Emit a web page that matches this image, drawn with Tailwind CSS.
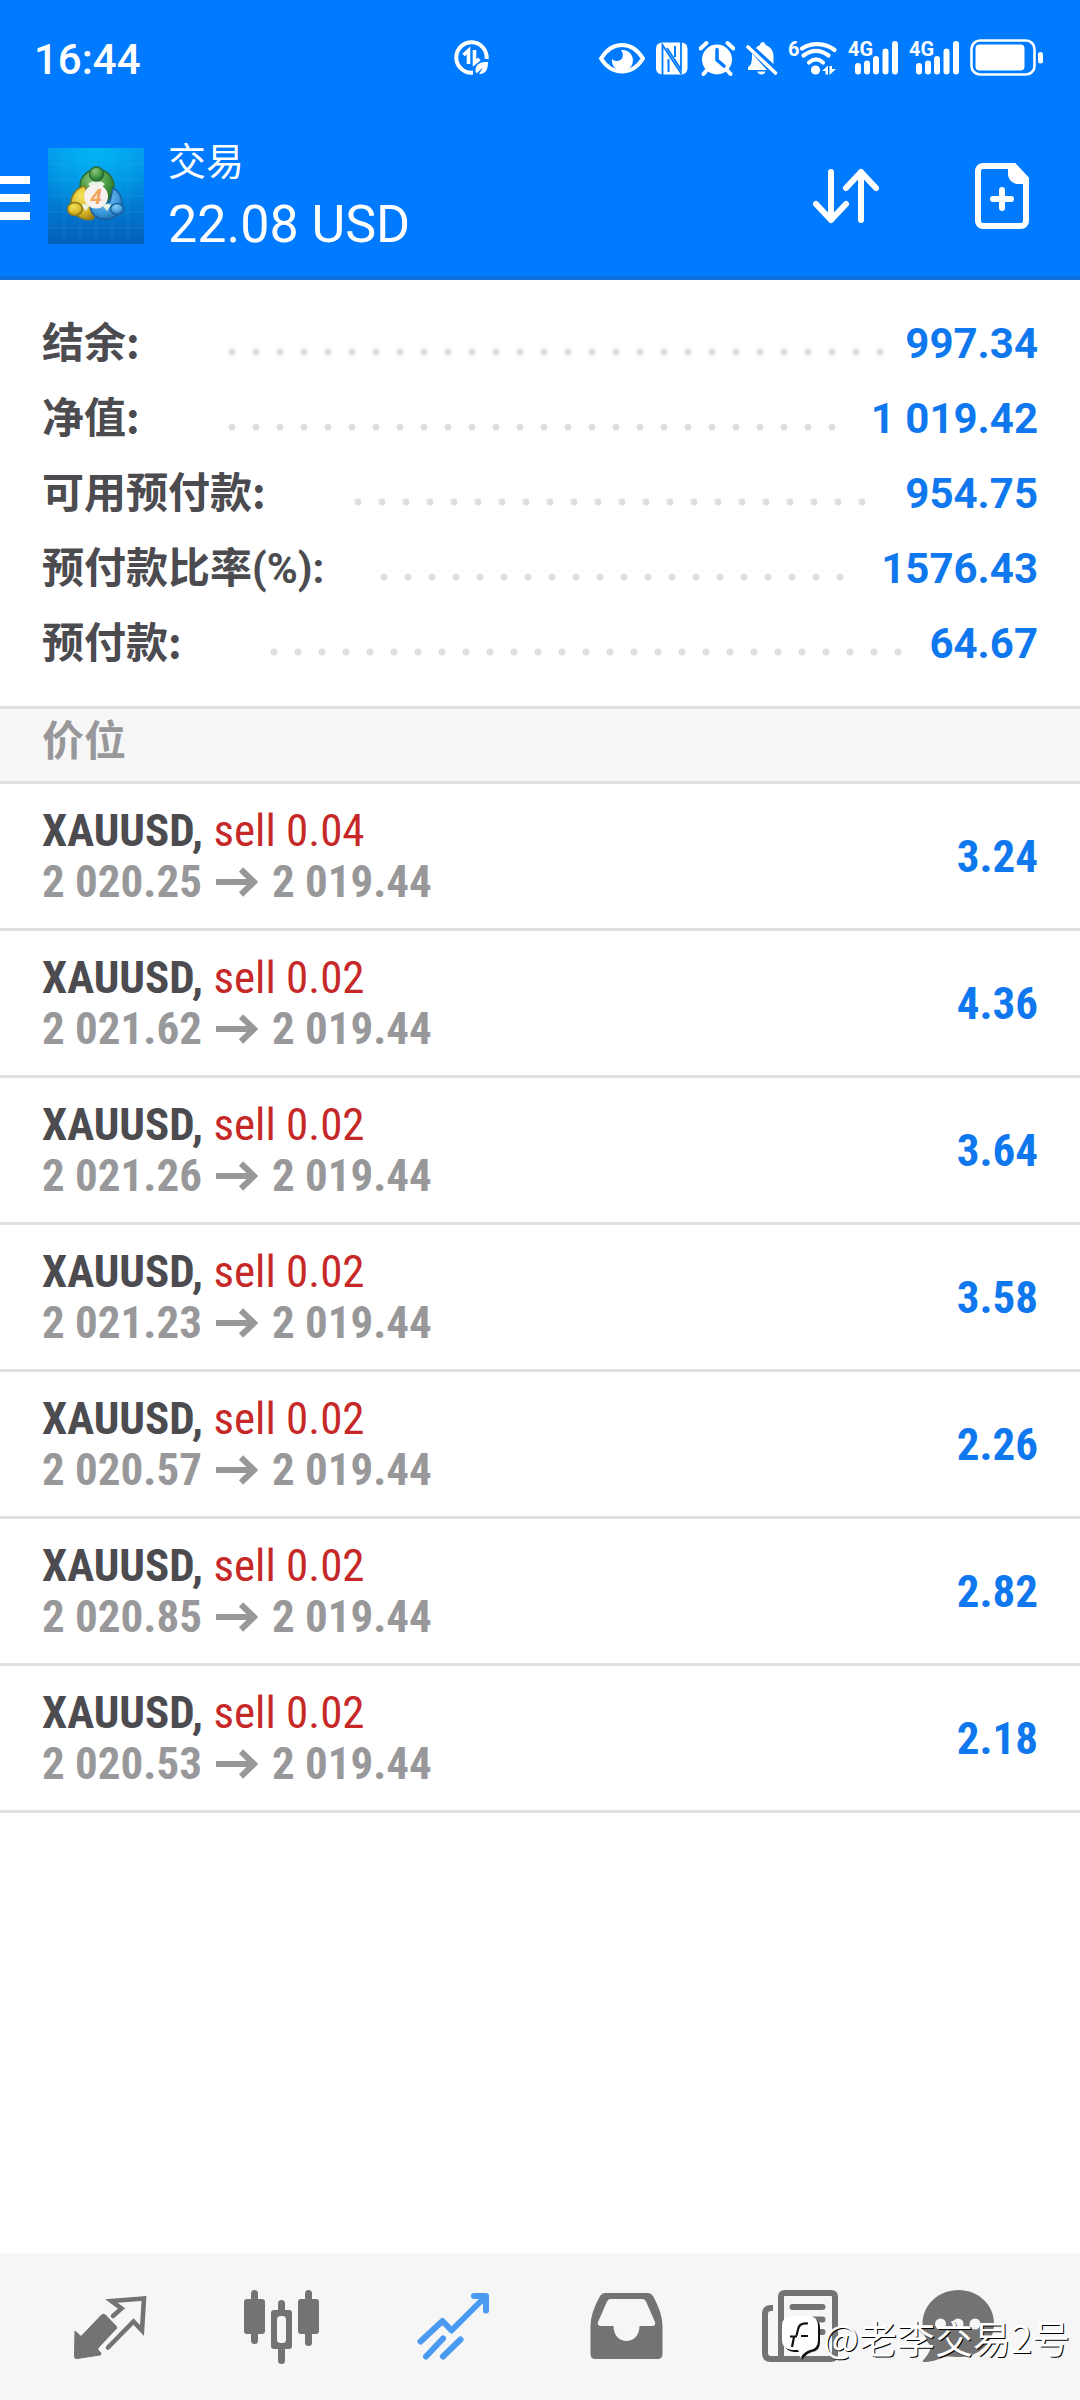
<!DOCTYPE html>
<html lang="zh-CN">
<head>
<meta charset="utf-8">
<meta name="viewport" content="width=device-width, initial-scale=1">
<title>交易</title>
<script src="https://cdn.jsdelivr.net/npm/@tailwindcss/browser@4"></script>
</head>
<body class="relative flex min-h-screen flex-col bg-white font-['Roboto','Noto_Sans_CJK_SC',sans-serif] text-[#4b4b50]">

<header class="border-b-4 border-[#0f6fdc] bg-[#007aff] text-white">
  <!-- Status bar -->
  <div class="grid h-[116px] grid-cols-[43.5%_10%_1fr] items-center pr-9">
    <span class="pt-1 pl-[34px] text-[42px] leading-none font-medium">16:44</span>
    <svg class="h-9 w-9" viewBox="0 0 36 36" fill="none" stroke="#fff" aria-hidden="true">
      <path d="M32.6 19A15.2 15.2 0 1 0 19 32.6" stroke-width="4"/>
      <path d="M9.500 15l5-4.500V24M20.500 10v13l5-4" stroke-width="3.600"/>
      <path d="M34 22c-7-.5-12.500 2-12.500 8 0 1 .3 2.300.8 3.500l6.700-6-4 6.500c7 .5 9-5 9-12z" fill="#fff" stroke="none"/>
    </svg>
    <div class="flex justify-end gap-[11px]">
      <svg class="h-11 w-[46px]" viewBox="0 0 46 44" aria-hidden="true">
        <path d="M2 22.500C8 13 15 9 23 9s15 4 21 13.500C38 32 31 35.500 23 35.500S8 32 2 22.500z" fill="none" stroke="#fff" stroke-width="4" stroke-linejoin="round"/>
        <path d="M22 14a10.500 10.500 0 1 1-9 9c3 3 8 2.500 10-.5 1.500-2.800 1-6-1-8.500z" fill="#fff"/>
      </svg>
      <svg class="h-11 w-8" viewBox="0 0 32 44" aria-hidden="true">
        <rect x="0" y="6.500" width="31.500" height="32" rx="6" fill="#fff"/>
        <path d="M6.500 39V9l19 29M25 6v27.500L11 12" fill="none" stroke="#007aff" stroke-width="1.800"/>
        <path d="M12.500 23v13M19 10v11" fill="none" stroke="#007aff" stroke-width="2"/>
      </svg>
      <svg class="h-11 w-9" viewBox="0 0 36 44" aria-hidden="true">
        <circle cx="18" cy="23.500" r="15" fill="#fff"/>
        <path d="M1.500 12.500l6-5.500M34.500 12.500l-6-5.500M8 34l-3.500 4M28 34l3.500 4" stroke="#fff" stroke-width="4" stroke-linecap="round"/>
        <path d="M18 13.500V24l7 6" fill="none" stroke="#007aff" stroke-width="3.500" stroke-linecap="round"/>
      </svg>
      <svg class="h-11 w-8" viewBox="0 0 32 44" aria-hidden="true">
        <path d="M6 17.500L21 34H2v-2.500l3-3.500c1-3 1-7 1-10.500zM10 12c1-1.500 2.500-2.500 4-3 .5-4 5-4 5.500 0 5 1.500 8 6 8 11v8zM11.500 35.500h8c-.5 4-7.500 4-8 0z" fill="#fff"/>
        <path d="M2 11l27.500 26" stroke="#fff" stroke-width="3.600" stroke-linecap="round"/>
      </svg>
      <svg class="h-11 w-12 overflow-visible" viewBox="0 0 48 44" fill="none" stroke="#fff" stroke-width="4.200" stroke-linecap="round" aria-hidden="true">
        <text x="-1" y="19.500" fill="#fff" stroke="none" class="text-[20px] font-bold">6</text>
        <path d="M13 12.500c9-6 23-6 32.500 1.500M14.500 19.500c8-6 17-6 25 0M20 26.500c4.500-4 9.500-4 14 0"/>
        <circle cx="26.500" cy="34" r="4.600" fill="#fff" stroke="none"/>
        <path d="M33 35l6-5.500v9h-2.500V35zM40.500 30h2.500v3h4l-6.500 6z" fill="#fff" stroke="none"/>
      </svg>
      <svg class="h-11 w-[50px]" viewBox="0 0 50 44" aria-hidden="true">
        <text x="0" y="20" fill="#fff" class="text-[20px] font-bold">4G</text>
        <path d="M10 30v5.500M19 27.500v8M28 23v12.500M37.500 15.500v20M47 8v27.500" stroke="#fff" stroke-width="6" stroke-linecap="round"/>
      </svg>
      <svg class="h-11 w-[50px]" viewBox="0 0 50 44" aria-hidden="true">
        <text x="0" y="20" fill="#fff" class="text-[20px] font-bold">4G</text>
        <path d="M10 30v5.500M19 27.500v8M28 23v12.500M37.500 15.500v20M47 8v27.500" stroke="#fff" stroke-width="6" stroke-linecap="round"/>
      </svg>
      <svg class="h-11 w-[74px]" viewBox="0 0 74 44" aria-hidden="true">
        <rect x="1.500" y="4.500" width="63" height="34" rx="8.500" fill="none" stroke="#fff" stroke-width="2.600"/>
        <rect x="5.500" y="8.500" width="49" height="26" rx="4" fill="#fff"/>
        <rect x="68" y="16" width="5" height="11.500" rx="2.500" fill="#fff"/>
      </svg>
    </div>
  </div>

  <!-- App bar -->
  <div class="flex h-[160px] items-center pr-[51px]">
    <button type="button" aria-label="菜单" class="flex w-12 flex-col gap-[10px] pt-1">
      <span class="h-2 w-[30px] bg-white"></span>
      <span class="h-2 w-[30px] bg-white"></span>
      <span class="h-2 w-[30px] bg-white"></span>
    </button>
    <svg class="h-24 w-24" viewBox="0 0 96 96" role="img" aria-label="MetaTrader 4">
      <defs>
        <linearGradient id="sky" x1="0" y1="0" x2="0" y2="1"><stop offset="0" stop-color="#0597e8"/><stop offset=".5" stop-color="#0080d6"/><stop offset="1" stop-color="#0560b8"/></linearGradient>
        <radialGradient id="glow" cx=".5" cy="0" r=".7"><stop offset="0" stop-color="#00b4f5"/><stop offset="1" stop-color="#00b4f5" stop-opacity="0"/></radialGradient>
        <radialGradient id="green" cx=".4" cy=".3" r=".8"><stop offset="0" stop-color="#8cc878"/><stop offset=".6" stop-color="#3f9440"/><stop offset="1" stop-color="#1d6428"/></radialGradient>
        <radialGradient id="yellow" cx=".4" cy=".3" r=".8"><stop offset="0" stop-color="#f3e35a"/><stop offset=".6" stop-color="#dcb827"/><stop offset="1" stop-color="#9a7b14"/></radialGradient>
        <radialGradient id="blue" cx=".4" cy=".3" r=".8"><stop offset="0" stop-color="#8dcdf4"/><stop offset=".6" stop-color="#3f9bdc"/><stop offset="1" stop-color="#1664ab"/></radialGradient>
      </defs>
      <path fill="url(#sky)" d="M0 0h96v96H0z"/>
      <path fill="url(#glow)" d="M0 0h96v96H0z"/>
      <path d="M16 0v96M32 0v96M48 0v96M64 0v96M80 0v96M0 16h96M0 32h96M0 48h96M0 64h96M0 80h96" stroke="#5cc4ff" stroke-opacity=".15"/>
      <g stroke-width="1.500">
        <path d="M32 39a17 17 0 1 1 33 5l-6 10-20-13-7 1z" fill="url(#green)" stroke="#2b6b35"/>
        <path d="M37 38a17 17 0 1 0 8 33l3-6-9-19z" fill="url(#yellow)" stroke="#8d7a1c"/>
        <path d="M65 40c12 7 12 24-1 30-12 4-21-2-22-12l20-4z" fill="url(#blue)" stroke="#1c5f9c"/>
        <path d="M40 36c4-4 13-4 17 0l-4 4H44zM33 57c3-2 6-1 8 1l-3 5zM63 57c-3-2-6-1-8 1l4 5z" fill="#e8f4e4" stroke="none"/>
        <circle cx="48.500" cy="26" r="7" fill="url(#green)" stroke="#2b6b35"/>
        <ellipse cx="27" cy="61" rx="7.500" ry="6.500" fill="url(#yellow)" stroke="#8d7a1c"/>
        <ellipse cx="69" cy="61" rx="6.500" ry="5.500" fill="url(#blue)" stroke="#1c5f9c"/>
      </g>
      <circle cx="48" cy="48.500" r="12" fill="#f6f1ee"/>
      <text x="48" y="56" text-anchor="middle" fill="#f2a35a" class="text-[21px] font-bold italic">4</text>
    </svg>
    <div class="ml-6 flex-1 pt-[3px]">
      <h1 class="text-[38px] leading-[52px]">交易</h1>
      <p class="pt-[3px] text-[52px] leading-[68px]">22.08 USD</p>
    </div>
    <button type="button" aria-label="排序">
      <svg class="h-[66px] w-[66px]" viewBox="0 0 66 66" fill="none" stroke="#fff" stroke-width="6" stroke-linecap="round" stroke-linejoin="round">
        <path d="M18 9v48M3 41l15 16 15-16M48 57V9M33 25L48 9l15 16"/>
      </svg>
    </button>
    <button type="button" aria-label="新订单" class="ml-24">
      <svg class="h-[66px] w-[54px]" viewBox="0 0 54 66" fill="none" stroke="#fff" stroke-width="6" stroke-linecap="round">
        <path d="M8 3h31l12 13v42a5 5 0 0 1-5 5H8a5 5 0 0 1-5-5V8a5 5 0 0 1 5-5z"/>
        <path d="M33 3h8l11 12v6H42c-6-1-9-6-9-10z" fill="#fff" stroke="none"/>
        <path d="M27 27v18M18 36h18"/>
      </svg>
    </button>
  </div>
</header>

<main class="flex-1">
  <!-- Account summary -->
  <dl class="pt-[22px] pb-[29px] text-[42px] leading-[75px] font-bold">
    <div class="flex h-[75px] items-baseline px-[42px]">
      <dt class="mr-20 font-['Noto_Sans_CJK_SC',sans-serif]">结余:</dt>
      <dd class="mr-3 h-2 flex-1 self-center pt-4" aria-hidden="true"><div class="h-2 w-[round(down,100%,24px)] bg-[radial-gradient(circle,#dfdfdf_3px,transparent_4px)] bg-[length:24px_8px]"></div></dd>
      <dd class="text-[#0f78ee]">997.34</dd>
    </div>
    <div class="flex h-[75px] items-baseline px-[42px]">
      <dt class="mr-20 font-['Noto_Sans_CJK_SC',sans-serif]">净值:</dt>
      <dd class="mr-3 h-2 flex-1 self-center pt-4" aria-hidden="true"><div class="h-2 w-[round(down,100%,24px)] bg-[radial-gradient(circle,#dfdfdf_3px,transparent_4px)] bg-[length:24px_8px]"></div></dd>
      <dd class="text-[#0f78ee]">1 019.42</dd>
    </div>
    <div class="flex h-[75px] items-baseline px-[42px]">
      <dt class="mr-20 font-['Noto_Sans_CJK_SC',sans-serif]">可用预付款:</dt>
      <dd class="mr-3 h-2 flex-1 self-center pt-4" aria-hidden="true"><div class="h-2 w-[round(down,100%,24px)] bg-[radial-gradient(circle,#dfdfdf_3px,transparent_4px)] bg-[length:24px_8px]"></div></dd>
      <dd class="text-[#0f78ee]">954.75</dd>
    </div>
    <div class="flex h-[75px] items-baseline px-[42px]">
      <dt class="mr-12 font-['Noto_Sans_CJK_SC',sans-serif]">预付款比率<span class="font-['Roboto',sans-serif] leading-none">(%):</span></dt>
      <dd class="mr-3 h-2 flex-1 self-center pt-4" aria-hidden="true"><div class="h-2 w-[round(down,100%,24px)] bg-[radial-gradient(circle,#dfdfdf_3px,transparent_4px)] bg-[length:24px_8px]"></div></dd>
      <dd class="text-[#0f78ee]">1576.43</dd>
    </div>
    <div class="flex h-[75px] items-baseline px-[42px]">
      <dt class="mr-20 font-['Noto_Sans_CJK_SC',sans-serif]">预付款:</dt>
      <dd class="mr-3 h-2 flex-1 self-center pt-4" aria-hidden="true"><div class="h-2 w-[round(down,100%,24px)] bg-[radial-gradient(circle,#dfdfdf_3px,transparent_4px)] bg-[length:24px_8px]"></div></dd>
      <dd class="text-[#0f78ee]">64.67</dd>
    </div>
  </dl>

  <h2 class="h-[78px] border-y-3 border-[#e1e1e1] bg-[#f7f7f7] px-[42px] text-[42px] leading-[66px] font-bold text-[#98989a]">价位</h2>

  <!-- Open positions -->
  <table class="w-full border-separate border-spacing-0 font-['Roboto_Condensed','Liberation_Sans_Narrow',sans-serif] text-[45px] leading-[51px] font-bold">
    <tbody id="positions"></tbody>
  </table>
</main>

<nav class="grid h-[147px] grid-cols-[172fr_172fr_172fr_172fr_172fr_148fr] items-center justify-items-center bg-[#f6f6f6] pr-12 pl-6 text-[#737373]">
  <a href="#quotes" aria-label="行情">
    <svg class="h-[76px] w-[76px]" viewBox="0 0 76 76">
      <path d="M3 42l6 5.500L29.500 26q2-1.500 4 0L44 37q1.500 1.500 0 3L26.500 58.500q-1.500 1.500 0 3L29 64q.5 1.500-1 2L5 69.500Q2.500 70 2.500 67z" fill="currentColor" stroke="currentColor" stroke-linejoin="round"/>
      <path d="M41 27l8.500-7.500L39.500 12 72 9.500l-2 32-8.500-9L36 58.500" fill="none" stroke="currentColor" stroke-width="4.600" stroke-linecap="round"/>
    </svg>
  </a>
  <a href="#charts" aria-label="图表">
    <svg class="h-[76px] w-[76px]" viewBox="0 0 76 76" fill="currentColor">
      <rect x="7" y="1" width="7" height="54" rx="3.500"/><rect x="0" y="10" width="21" height="35" rx="3"/>
      <rect x="34" y="11" width="7" height="64" rx="3.500"/><path d="M30 21h15a3 3 0 0 1 3 3v33a3 3 0 0 1-3 3H30a3 3 0 0 1-3-3V24a3 3 0 0 1 3-3z"/>
      <rect x="33" y="27" width="9" height="27" rx="3.500" fill="#f6f6f6"/>
      <rect x="61" y="1" width="7" height="56" rx="3.500"/><rect x="54" y="10" width="21" height="35" rx="3"/>
    </svg>
  </a>
  <a href="#trade" aria-label="交易" aria-current="page" class="text-[#4a9af2]">
    <svg class="h-[76px] w-[76px]" viewBox="0 0 76 76" fill="none" stroke="currentColor" stroke-width="6" stroke-linecap="round" stroke-linejoin="round">
      <path d="M4.500 52.500L26.500 32l9 9.500L69 8M58 7h12v14.500M10 67.500l17-18M27 67.500L44.500 50.500"/>
    </svg>
  </a>
  <a href="#history" aria-label="历史">
    <svg class="h-[76px] w-[76px]" viewBox="0 0 76 76">
      <path fill="currentColor" fill-rule="evenodd" d="M17 4h43q3 0 5 3 9.500 17 9.500 30v28q0 5-5 5h-62q-5 0-5-5V37q0-13 9.500-30 2-3 5-3zM22 10q-2 0-3 2.500L10 33q-1 4 3 4h12.500c0 20 26 20 26 0H64q4 0 3-4l-9-20.500Q57 10 55 10z"/>
    </svg>
  </a>
  <a href="#news" aria-label="新闻">
    <svg class="h-[76px] w-[76px] overflow-visible" viewBox="0 0 76 76" fill="none" stroke="currentColor" stroke-width="6">
      <path d="M13 19h-2q-6 0-6 6v39q0 6 6 6h60q4 0 4-4"/>
      <path d="M21 70V8q0-4 4-4h46q4 0 4 4v62"/>
      <path d="M32.500 18h30M32.500 30.500h9M53.500 30.500h9M32.500 43h9M53.500 43h9" stroke-linecap="round"/>
    </svg>
  </a>
  <a href="#chat" aria-label="聊天">
    <svg class="h-[76px] w-[76px]" viewBox="0 0 76 76">
      <path fill="currentColor" d="M38.500 1C58 1 74 15.500 74 34.500S59 68 40 68c-8 0-12-1-15 0C17 71 10 73 4 73q-2 0-1-1.500C7 67 10.500 62 11 57 5 51 2.500 43 2.500 35 2.500 15.500 19 1 38.500 1z"/>
      <g fill="#f6f6f6"><circle cx="20.500" cy="35" r="5.500"/><circle cx="38" cy="35" r="5.500"/><circle cx="55" cy="35" r="5.500"/></g>
    </svg>
  </a>
</nav>

<!-- Author mark over the bottom bar -->
<div class="pointer-events-none absolute right-[10px] bottom-[38px] flex items-center gap-1 text-white">
  <svg class="h-11 w-[38px] overflow-visible" viewBox="0 0 38 44" aria-hidden="true">
    <path d="M13 3h16q10 0 10 10v14q0 9-8 10-5 1-10 8 0-5-2-8-16 1-16-10V13Q3 3 13 3z" fill="#111"/>
    <path d="M11 1h16q10 0 10 10v14q0 9-8 10-5 1-10 8 0-5-2-8-16 1-16-10V11Q1 1 11 1z" fill="#fff"/>
    <path d="M27 8.500q-9-1-10 6l-1.500 6M9 21.500h7M20 21h7M13 22l-2 10" fill="none" stroke="#111" stroke-width="2.200"/>
  </svg>
  <span class="font-['Noto_Sans_CJK_SC',sans-serif] text-[38px] leading-[50px] font-normal text-shadow-[1px_1px_0_#000]">@老李交易2号</span>
</div>

<script>
  const positions = [
    ['0.04', '2 020.25', '3.24'],
    ['0.02', '2 021.62', '4.36'],
    ['0.02', '2 021.26', '3.64'],
    ['0.02', '2 021.23', '3.58'],
    ['0.02', '2 020.57', '2.26'],
    ['0.02', '2 020.85', '2.82'],
    ['0.02', '2 020.53', '2.18'],
  ];
  document.getElementById('positions').innerHTML = positions.map(([lots, open, profit]) => `
    <tr class="h-[147px]">
      <td class="border-b-3 border-[#e1e1e1] pl-[42px]">
        <div>XAUUSD, <span class="font-normal text-[#c62828]">sell ${lots}</span></div>
        <div class="flex items-center gap-[14px] text-[#98989a]">
          ${open}
          <svg class="h-[30px] w-[42px]" viewBox="0 0 42 30" fill="none" stroke="currentColor" stroke-width="6" role="img" aria-label="至"><path d="M0 15h38M25 2.500L38 15 25 27.500"/></svg>
          2 019.44
        </div>
      </td>
      <td class="border-b-3 border-[#e1e1e1] pr-[42px] text-right text-[#0f78ee]">${profit}</td>
    </tr>`).join('');
</script>
</body>
</html>
